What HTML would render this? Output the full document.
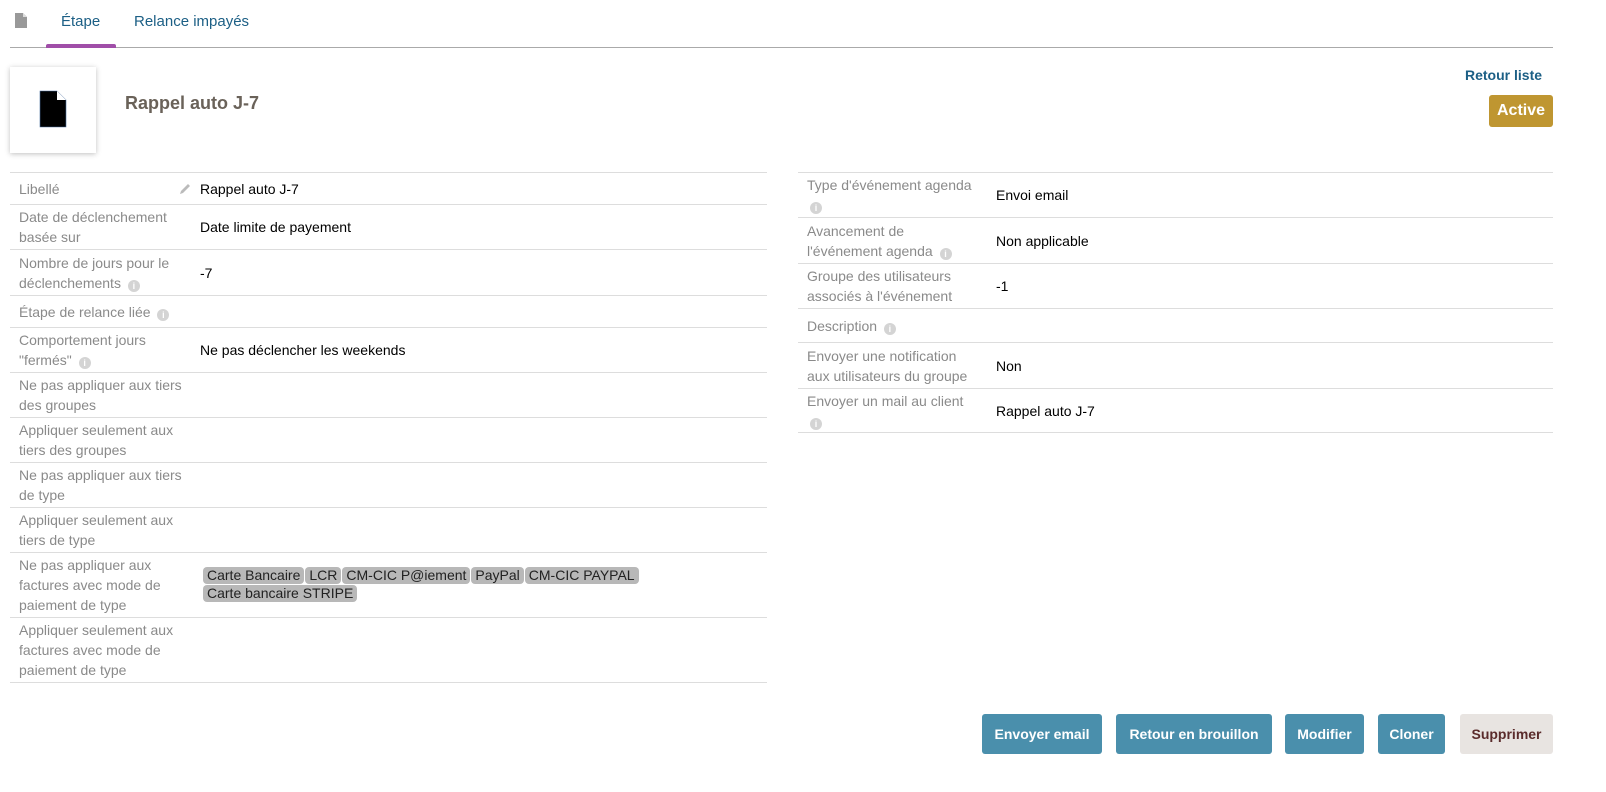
<!DOCTYPE html>
<html><head><meta charset="utf-8"><style>
*{box-sizing:border-box;margin:0;padding:0}
body{width:1606px;height:792px;background:#fff;font-family:"Liberation Sans",sans-serif;font-size:14px;color:#000;position:relative;overflow:hidden}
.abs{position:absolute}
.tabs{left:10px;top:0;width:1543px;height:48px;border-bottom:1px solid #aaa}
.tab{position:absolute;top:13px;color:#1c5f85;font-size:15px}
.uline{position:absolute;left:46px;top:44px;width:70px;height:4px;background:#a04ea8;border-radius:2px 2px 0 0}
.logo{left:10px;top:67px;width:86px;height:86px;background:#fff;box-shadow:0 1px 5px rgba(0,0,0,.25)}
.tbl{position:absolute;border-top:1px solid #ddd}
.row{display:flex;align-items:center;border-bottom:1px solid #ddd}
.lab{width:190px;padding-left:9px;color:#8a8a8a;line-height:20px;position:relative;flex:none}
.r .lab{width:198px;padding-right:20px}
.val{line-height:20px}
.i{display:inline-block;width:12px;height:12px;border-radius:50%;background:#d4d4d4;color:#fff;font-size:9px;font-weight:bold;text-align:center;line-height:12px;vertical-align:-1px;margin-left:3px}
.tag{display:inline-block;background:#b8b8b8;border-radius:4px;padding:0 4px;line-height:17px;color:#222;margin-right:1px;margin-bottom:1px}
.btn{position:absolute;top:714px;height:40px;border-radius:3px;background:#4a8fac;color:#fff;font-weight:bold;font-size:14px;line-height:40px;text-align:center}
</style></head><body>
<div class="abs tabs"></div>
<svg class="abs" style="left:15px;top:13px" width="12" height="15" viewBox="0 0 12 15"><path d="M0 0H8L12 4V15H0Z" fill="#999"/><path d="M8 0V4H12" fill="#ddd"/></svg>
<div class="tab" style="left:61px">Étape</div>
<div class="tab" style="left:134px">Relance impayés</div>
<div class="uline"></div>
<div class="abs logo"><svg style="position:absolute;left:29px;top:23px" width="28" height="38" viewBox="0 0 28 38"><path d="M1 1H18L27 10V37H1Z" fill="#000" stroke="#4a6fa0" stroke-width="0.6"/><path d="M18 1V10H27Z" fill="#fff"/></svg></div>
<div class="abs" style="left:125px;top:93px;font-size:18px;font-weight:bold;color:#6a6259">Rappel auto J-7</div>
<div class="abs" style="left:1465px;top:67px;font-weight:bold;color:#1c5f85;font-size:14px">Retour liste</div>
<div class="abs" style="left:1489px;top:95px;width:64px;height:32px;background:#bf9631;border-radius:3px;color:#fff;font-weight:bold;font-size:16px;line-height:32px;text-align:center">Active</div>

<div class="tbl" style="left:10px;top:172px;width:757px">
<div class="row" style="height:32px"><div class="lab">Libellé<svg style="position:absolute;right:8px;top:3px" width="14" height="14" viewBox="0 0 14 14"><path d="M2 12L3 9L10 2L12 4L5 11Z" fill="#bbb"/></svg></div><div class="val">Rappel auto J-7</div></div>
<div class="row" style="height:45px"><div class="lab">Date de déclenchement basée sur</div><div class="val">Date limite de payement</div></div>
<div class="row" style="height:46px"><div class="lab">Nombre de jours pour le déclenchements <span class="i">i</span></div><div class="val">-7</div></div>
<div class="row" style="height:32px"><div class="lab" style="width:300px">Étape de relance liée <span class="i">i</span></div></div>
<div class="row" style="height:45px"><div class="lab">Comportement jours "fermés" <span class="i">i</span></div><div class="val">Ne pas déclencher les weekends</div></div>
<div class="row" style="height:45px"><div class="lab">Ne pas appliquer aux tiers des groupes</div></div>
<div class="row" style="height:45px"><div class="lab">Appliquer seulement aux tiers des groupes</div></div>
<div class="row" style="height:45px"><div class="lab">Ne pas appliquer aux tiers de type</div></div>
<div class="row" style="height:45px"><div class="lab">Appliquer seulement aux tiers de type</div></div>
<div class="row" style="height:65px"><div class="lab">Ne pas appliquer aux factures avec mode de paiement de type</div><div class="val" style="padding-left:3px;width:480px;line-height:17px"><span class="tag">Carte Bancaire</span><span class="tag">LCR</span><span class="tag">CM-CIC P@iement</span><span class="tag">PayPal</span><span class="tag">CM-CIC PAYPAL</span><br><span class="tag">Carte bancaire STRIPE</span></div></div>
<div class="row" style="height:65px"><div class="lab">Appliquer seulement aux factures avec mode de paiement de type</div></div>
</div>

<div class="tbl r" style="left:798px;top:172px;width:755px">
<div class="row" style="height:45px"><div class="lab">Type d'événement agenda<br><span class="i" style="margin-left:3px">i</span></div><div class="val">Envoi email</div></div>
<div class="row" style="height:46px"><div class="lab">Avancement de<br>l'événement agenda <span class="i">i</span></div><div class="val">Non applicable</div></div>
<div class="row" style="height:45px"><div class="lab">Groupe des utilisateurs associés à l'événement</div><div class="val">-1</div></div>
<div class="row" style="height:34px"><div class="lab">Description <span class="i">i</span></div></div>
<div class="row" style="height:46px"><div class="lab">Envoyer une notification<br>aux utilisateurs du groupe</div><div class="val">Non</div></div>
<div class="row" style="height:44px"><div class="lab">Envoyer un mail au client<br><span class="i" style="margin-left:3px">i</span></div><div class="val">Rappel auto J-7</div></div>
</div>

<div class="btn" style="left:982px;width:120px">Envoyer email</div>
<div class="btn" style="left:1116px;width:156px">Retour en brouillon</div>
<div class="btn" style="left:1285px;width:79px">Modifier</div>
<div class="btn" style="left:1378px;width:67px">Cloner</div>
<div class="btn" style="left:1460px;width:93px;background:#e8e4e1;color:#5a2b2b">Supprimer</div>
</body></html>
